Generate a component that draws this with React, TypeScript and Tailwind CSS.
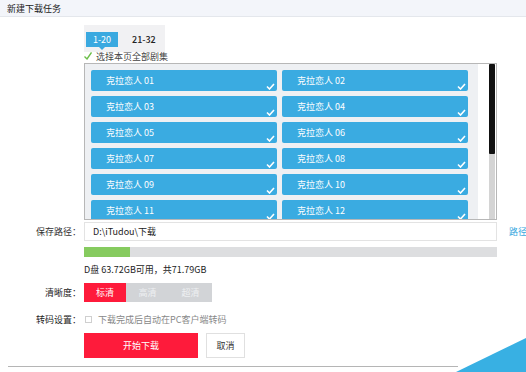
import { useState } from "react";

const font = { fontFamily: '"Noto Sans CJK SC", "Noto Sans", sans-serif' };

const episodes = Array.from({ length: 12 }, (_, i) => String(i + 1).padStart(2, "0"));

function Tick() {
  return (
    <svg width="9" height="7" viewBox="0 0 9 7" className="absolute right-[2px] bottom-[1px]">
      <path d="M1 3.5 L3.5 6 L8 1" stroke="white" strokeWidth="1.6" fill="none" />
    </svg>
  );
}

export default function App() {
  const [quality, setQuality] = useState("标清");

  return (
    <div
      className="relative w-[526px] h-[372px] overflow-hidden bg-white text-[#333] text-[9px] leading-none"
      style={font}
    >
      <div className="h-[17px] bg-[#f3f5fa] border-b border-[#e4e7ec] flex items-center pl-[7px] text-[9px] text-[#222]">
        新建下载任务
      </div>

      <div className="pl-[84px]">
        {/* page tabs */}
        <div className="mt-[8px] w-[81px] h-[27px] bg-[#f1f1f3] flex items-start pt-[7px] pl-[2px]">
          <div className="relative w-[32px] h-[15px] bg-[#3aa9e0] text-white flex items-center justify-center text-[9px]">
            1-20
            <span className="absolute left-[13px] top-[15px] w-0 h-0 border-l-[3px] border-r-[3px] border-t-[3px] border-l-transparent border-r-transparent border-t-[#3aa9e0]" />
          </div>
          <div className="ml-[14px] h-[15px] flex items-center text-[9px] font-medium text-[#222]">21-32</div>
        </div>
        <div className="-mt-[2px] h-[12px] flex items-center gap-[4px] text-[9px] text-[#444]">
          <svg width="8" height="8" viewBox="0 0 8 8">
            <path d="M0.5 4.5 L3 7 L7.5 0.5" stroke="#6cbf4a" strokeWidth="1.4" fill="none" />
          </svg>
          选择本页全部剧集
        </div>

        {/* episode list */}
        <div className="mt-[1px] w-[413px] h-[157px] border border-[#b7b7b7] flex overflow-hidden">
          <div className="w-[393px] shrink-0 bg-[#eef0f3] pl-[6px] pt-[6px] grid grid-cols-[186px_186px] gap-x-[5px] gap-y-[5px] content-start">
            {episodes.map((n) => (
              <div
                key={n}
                className="relative h-[21px] rounded-[2px] bg-[#3aabe1] text-white flex items-center pl-[15px] text-[9px]"
              >
                克拉恋人 {n}
                <Tick />
              </div>
            ))}
          </div>
          <div className="flex-1 bg-white flex justify-end pr-[1px]">
            <div className="w-[6px] h-full bg-[#d4d4d4] flex flex-col">
              <div className="h-[90px] bg-[#111] rounded-[1px]" />
            </div>
          </div>
        </div>
      </div>

      {/* save path */}
      <div className="mt-[2px] flex items-center">
        <div className="w-[84px] shrink-0 text-right pr-[3px] text-[9px]">保存路径：</div>
        <div className="w-[413px] shrink-0 h-[19px] border border-[#e3e3e3] flex items-center pl-[8px] text-[9px] text-[#222]">
          D:\iTudou\下载
        </div>
        <div className="ml-[12px] whitespace-nowrap text-[9px] text-[#3aa9e0]">路径</div>
      </div>

      <div className="pl-[84px]">
        <div className="mt-[6px] w-[413px] h-[10px] bg-[#dddee0]">
          <div className="w-[46px] h-full bg-[#86cb5f]" />
        </div>
        <div className="mt-[7px] h-[10px] flex items-center text-[9px] text-[#222]">
          D盘 63.72GB可用，共71.79GB
        </div>
      </div>

      {/* quality */}
      <div className="mt-[9px] flex items-center">
        <div className="w-[84px] text-right pr-[3px] text-[9px] text-[#222]">清晰度：</div>
        <div className="flex">
          {["标清", "高清", "超清"].map((q) => (
            <button
              key={q}
              onClick={() => setQuality(q)}
              className={
                quality === q
                  ? "w-[42px] h-[19px] bg-[#fe1b3b] text-white text-[9px]"
                  : "w-[43px] h-[19px] bg-[#d2d4d7] text-[#eef0f2] text-[9px]"
              }
            >
              {q}
            </button>
          ))}
        </div>
      </div>

      {/* transcode */}
      <div className="mt-[13px] flex items-center">
        <div className="w-[84px] text-right pr-[3px] text-[9px] text-[#222]">转码设置：</div>
        <span className="w-[7px] h-[7px] border border-[#cfcfcf] bg-white ml-[1px]" />
        <span className="ml-[6px] text-[9px] text-[#888]">下载完成后自动在PC客户端转码</span>
      </div>

      {/* actions */}
      <div className="mt-[9px] pl-[84px] flex gap-[8px]">
        <button className="w-[114px] h-[25px] bg-[#fe1b3b] text-white text-[9px]">开始下载</button>
        <button className="w-[39px] h-[25px] bg-white border border-[#e0e0e0] text-[#333] text-[9px]">取消</button>
      </div>

      <div className="mt-[8px] ml-[8px] w-[450px] border-t border-[#b5b5b5]" />

      <svg className="absolute right-0 bottom-0" width="70" height="34" viewBox="0 0 70 34">
        <polygon points="0,34 70,0 70,34" fill="#38b0e3" />
      </svg>
    </div>
  );
}
